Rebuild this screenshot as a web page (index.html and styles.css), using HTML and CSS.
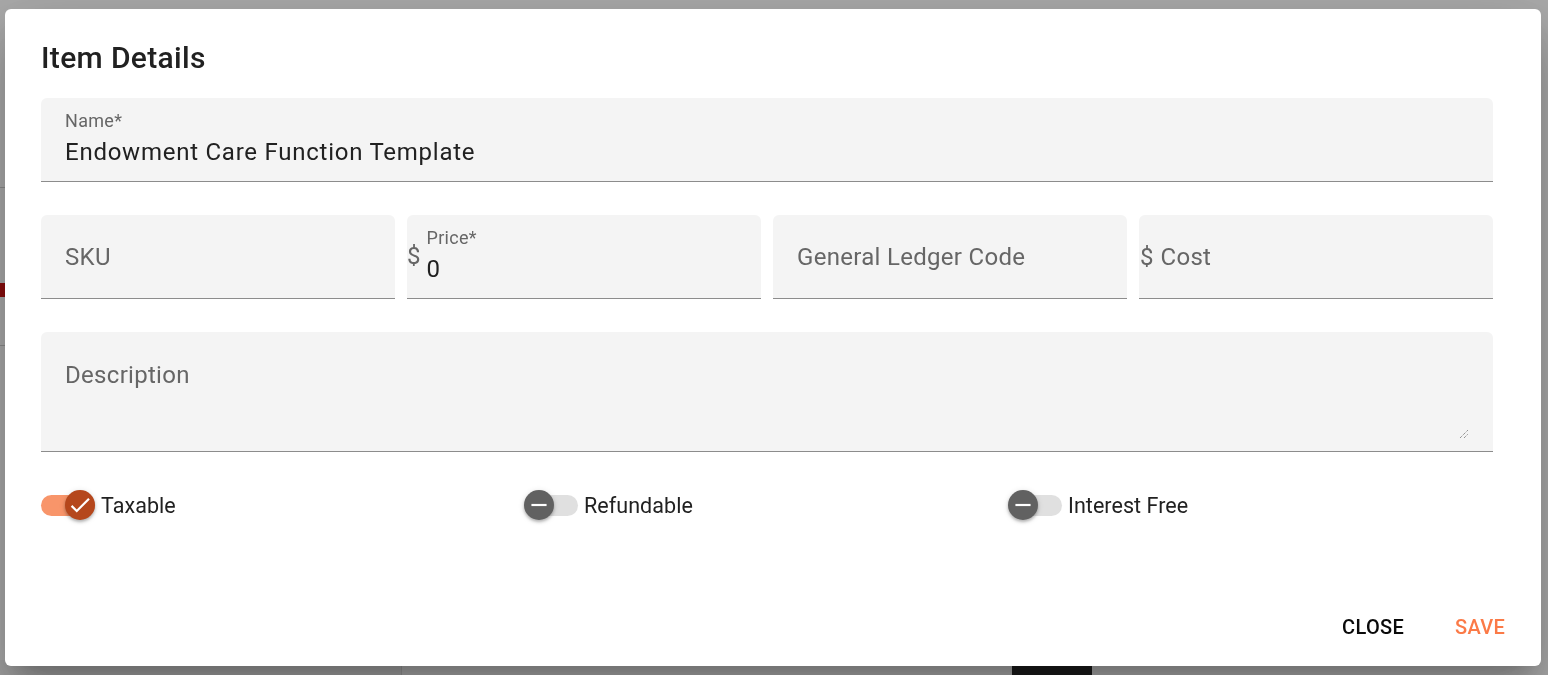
FILE: index.html
```html
<!DOCTYPE html>
<html lang="en">
<head>
<meta charset="utf-8">
<title>Item Details</title>
<link rel="stylesheet" href="styles.css">
</head>
<body>
<div class="app">
  <div class="app-side">
    <div class="side-line l1"></div>
    <div class="side-icon red"></div>
    <div class="side-line l2"></div>
  </div>
  <div class="app-bottom">
    <div class="bottom-left"></div>
    <div class="bottom-mid"></div>
    <div class="bottom-dark"></div>
    <div class="bottom-right"></div>
  </div>
</div>
<div class="scrim">
  <div class="dialog">
    <h2 class="dialog-title">Item Details</h2>
    <div class="dialog-body">
      <div class="field field-filled">
        <div class="field-inner">
          <span class="field-label-small">Name*</span>
          <span class="field-value">Endowment Care Function Template</span>
        </div>
      </div>

      <div class="field-row">
        <div class="field field-empty">
          <span class="field-placeholder">SKU</span>
        </div>
        <div class="field field-prefixed">
          <span class="prefix">$</span>
          <div class="field-inner">
            <span class="field-label-small">Price*</span>
            <span class="field-value">0</span>
          </div>
        </div>
        <div class="field field-empty">
          <span class="field-placeholder">General Ledger Code</span>
        </div>
        <div class="field field-prefixed field-empty">
          <span class="prefix prefix-mid">$</span>
          <span class="field-placeholder">Cost</span>
        </div>
      </div>

      <div class="field field-textarea">
        <span class="field-placeholder">Description</span>
        <svg class="resize" width="10" height="10" viewBox="0 0 10 10">
          <path d="M1 9 L9 1 M5 9 L9 5" stroke="#6b6b6b" stroke-width="1" stroke-dasharray="1 1" fill="none"/>
        </svg>
      </div>

      <div class="switch-row">
        <label class="switch">
          <span class="track on">
            <span class="thumb thumb-on">
              <svg width="26" height="26" viewBox="0 0 24 24"><path d="M21,7L9,19L3.5,13.5L4.91,12.09L9,16.17L19.59,5.59L21,7Z" fill="#fff"/></svg>
            </span>
          </span>
          <span class="switch-label">Taxable</span>
        </label>
        <label class="switch">
          <span class="track off">
            <span class="thumb thumb-off">
              <svg width="26" height="26" viewBox="0 0 24 24"><path d="M19,13H5V11H19V13Z" fill="#fff"/></svg>
            </span>
          </span>
          <span class="switch-label">Refundable</span>
        </label>
        <label class="switch">
          <span class="track off">
            <span class="thumb thumb-off">
              <svg width="26" height="26" viewBox="0 0 24 24"><path d="M19,13H5V11H19V13Z" fill="#fff"/></svg>
            </span>
          </span>
          <span class="switch-label">Interest Free</span>
        </label>
      </div>
    </div>
    <div class="dialog-actions">
      <button class="btn btn-close">Close</button>
      <button class="btn btn-save">Save</button>
    </div>
  </div>
</div>
</body>
</html>
```

FILE: styles.css
```css
* { box-sizing: border-box; }

html, body {
  margin: 0;
  padding: 0;
  width: 1548px;
  height: 675px;
  overflow: hidden;
  font-family: Roboto, "Liberation Sans", sans-serif;
}

body { position: relative; background: #fff; }

/* underlying page */
.app {
  position: absolute;
  inset: 0;
  background: #fff;
}
.app-side {
  position: absolute;
  left: 0;
  top: 0;
  width: 20px;
  height: 675px;
}
.side-line {
  position: absolute;
  left: 0;
  width: 20px;
  height: 1px;
  background: #ccc;
}
.l1 { top: 187px; }
.l2 { top: 345px; }
.side-icon.red {
  position: absolute;
  top: 283px;
  left: 0;
  width: 12px;
  height: 14px;
  background: #c00;
}
.app-bottom {
  position: absolute;
  left: 0;
  right: 0;
  top: 660px;
  height: 15px;
  display: flex;
}
.bottom-left { width: 402px; background: #f2f2f2; border-right: 1px solid #ddd; }
.bottom-mid { width: 610px; background: #fff; }
.bottom-dark { width: 80px; background: #1a1a1a; }
.bottom-right { flex: 1; background: #fff; }

.scrim {
  position: fixed;
  inset: 0;
  background: rgba(33, 33, 33, 0.38);
  display: flex;
  align-items: flex-start;
}

.dialog {
  margin: 9px 0 0 5px;
  width: 1536px;
  height: 657px;
  background: #fff;
  border-radius: 6px;
  display: flex;
  flex-direction: column;
  box-shadow: 0 16px 22px -10px rgba(0,0,0,.2), 0 36px 57px 4px rgba(0,0,0,.14), 0 14px 69px 12px rgba(0,0,0,.12);
}

.dialog-title {
  margin: 0;
  padding: 25px 36px 0 36px;
  font-size: 30px;
  line-height: 48px;
  font-weight: 500;
  color: #212121;
  letter-spacing: 0.35px;
}

.dialog-body {
  padding: 16px 48px 0 36px;
  display: flex;
  flex-direction: column;
}

.field {
  height: 84px;
  background: #f4f4f4;
  border-bottom: 1px solid #8c8c8c;
  border-radius: 6px 6px 0 0;
  display: flex;
  align-items: center;
  padding: 0 24px;
  color: #212121;
}

.field-filled { align-items: flex-start; }

.field-inner {
  display: flex;
  flex-direction: column;
  padding-top: 14px;
}

.field-label-small {
  font-size: 18px;
  line-height: 18px;
  color: #666;
  margin-bottom: 10px;
  letter-spacing: 0.3px;
}

.field-value {
  font-size: 24px;
  line-height: 24px;
  color: #212121;
  letter-spacing: 0.75px;
}

.field-placeholder {
  font-size: 24px;
  line-height: 24px;
  color: #666;
  letter-spacing: 0.3px;
}

.field-row {
  margin-top: 33px;
  display: grid;
  grid-template-columns: repeat(4, 1fr);
  gap: 12px;
}

.field-prefixed {
  padding-left: 0;
  align-items: flex-start;
}
.field-prefixed.field-empty { align-items: center; }

.prefix {
  font-size: 24px;
  line-height: 24px;
  color: #666;
  align-self: center;
  margin-left: 0;
  margin-right: 6px;
  margin-top: -2px;
}
.prefix-mid { margin-top: 0; margin-left: 1px; margin-right: 7px; }

.field-textarea {
  margin-top: 33px;
  height: 120px;
  align-items: flex-start;
  padding-top: 31px;
  position: relative;
}

.resize {
  position: absolute;
  right: 24px;
  bottom: 12px;
}

.switch-row {
  margin-top: 38px;
  display: grid;
  grid-template-columns: repeat(3, 1fr);
}

.switch {
  display: flex;
  align-items: center;
  gap: 6px;
  height: 30px;
}

.track {
  position: relative;
  width: 54px;
  height: 21px;
  border-radius: 11px;
}
.track.on { background: #f8956a; }
.track.off { background: #e0e0e0; width: 53px; }

.thumb {
  position: absolute;
  top: -4.5px;
  width: 30px;
  height: 30px;
  border-radius: 50%;
  display: flex;
  align-items: center;
  justify-content: center;
  box-shadow: 0 2px 3px rgba(0,0,0,.25), 0 1px 6px rgba(0,0,0,.12);
}
.thumb-on { left: 24px; background: #b5471c; }
.thumb-off { left: -1px; background: #616161; }

.switch-label {
  font-size: 21.5px;
  color: #212121;
  letter-spacing: 0.05px;
}

.dialog-actions {
  margin-top: auto;
  padding: 12px 12px 12px 12px;
  display: flex;
  justify-content: flex-end;
  gap: 3px;
}

.btn {
  height: 54px;
  padding: 0 24px;
  border: 0;
  background: transparent;
  font-family: Roboto, "Liberation Sans", sans-serif;
  font-size: 20px;
  font-weight: 500;
  text-transform: uppercase;
  letter-spacing: 0.3px;
  cursor: pointer;
}
.btn-close { color: #0a0a0a; }
.btn-save { color: #fb7a47; }
```
